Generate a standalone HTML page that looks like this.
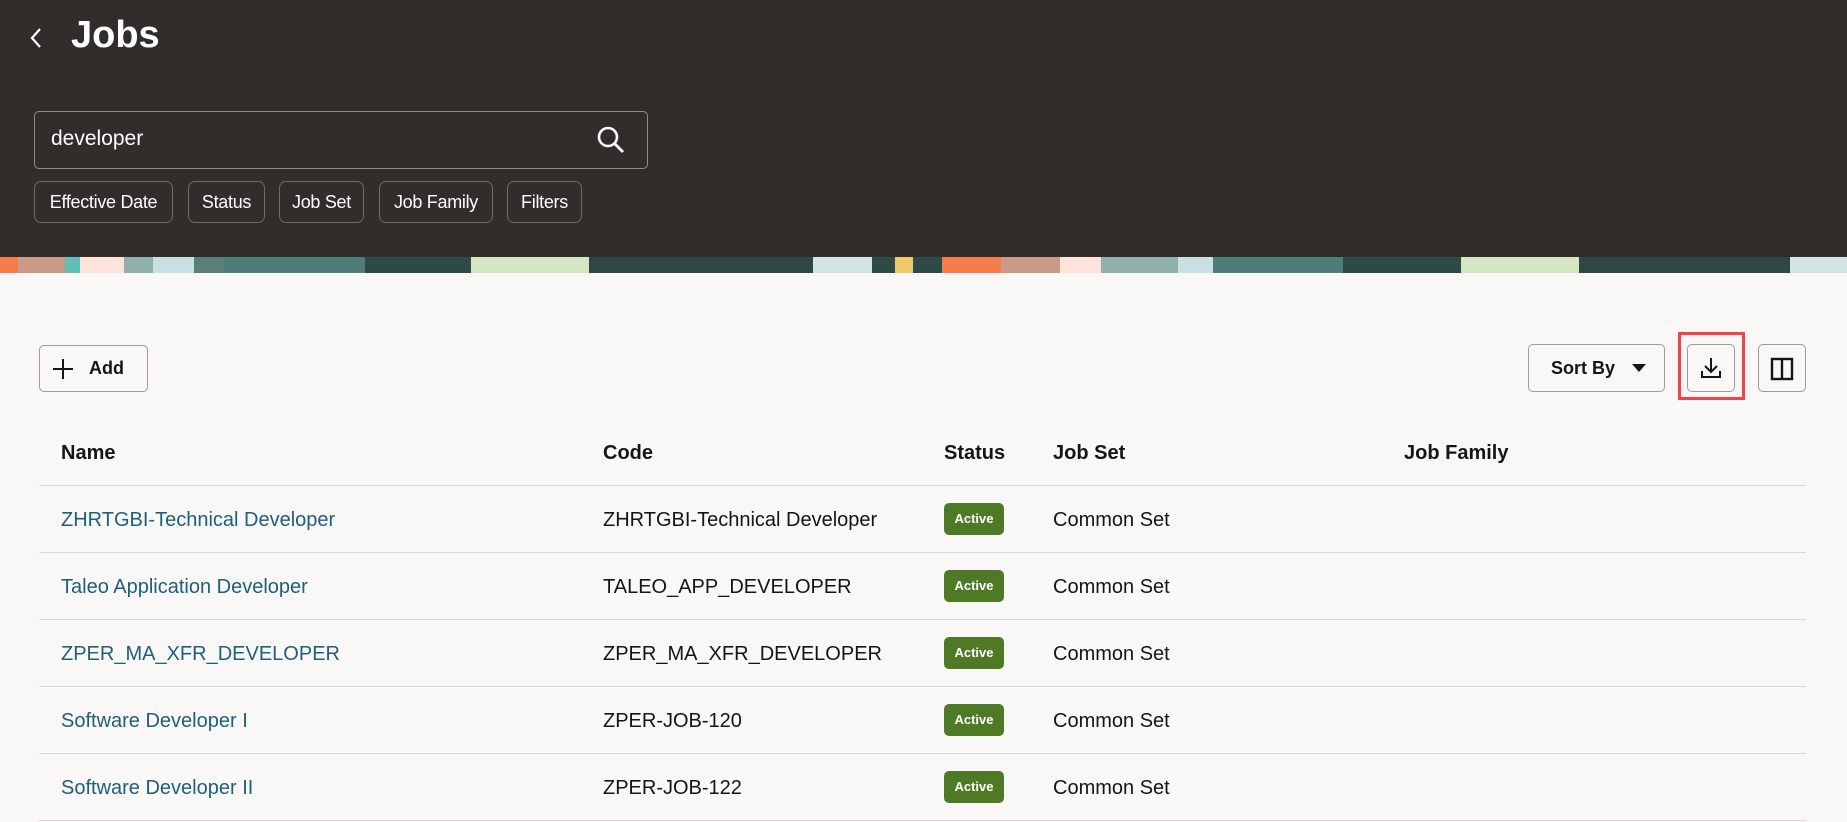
<!DOCTYPE html>
<html><head><meta charset="utf-8"><style>
*{box-sizing:border-box;margin:0;padding:0}
body{width:1847px;height:822px;overflow:hidden;background:#f9f8f6;font-family:"Liberation Sans",sans-serif;color:#161513;position:relative}
.hdr{position:absolute;left:0;top:0;width:1847px;height:257px;background:#312d2a}
.banner{position:absolute;left:0;top:257px;width:1847px;height:16px;background:linear-gradient(90deg,#f47c48 0 18px,#c99b86 18px 65px,#5fc0b8 65px 80px,#fde3da 80px 124px,#8fb0ad 124px 153px,#c8e0e2 153px 194px,#5a7f79 194px 224px,#4e7d78 224px 365px,#2d4a46 365px 471px,#d6e6c3 471px 589px,#2e4743 589px 813px,#d4e3e5 813px 872px,#2d4a46 872px 895px,#f0c96b 895px 913px,#2d4a46 913px 942px,#f47c48 942px 1001px,#c99b86 1001px 1060px,#fde3da 1060px 1101px,#8fb0ad 1101px 1178px,#c8e0e2 1178px 1213px,#4e7d78 1213px 1343px,#2d4a46 1343px 1461px,#d6e6c3 1461px 1579px,#2e4743 1579px 1790px,#d4e3e5 1790px)}
.abs{position:absolute}
.title{left:71px;top:14px;font-size:38px;font-weight:bold;color:#fff}
.search{left:34px;top:111px;width:614px;height:58px;border:1px solid #8f8b87;border-radius:5px;color:#fff;font-size:21px;padding:15px 16px}
.chip{top:181px;height:42px;border:1px solid #6f6a66;border-radius:7px;color:#fff;font-size:18px;line-height:40px;text-align:center;white-space:nowrap;letter-spacing:-0.3px}
.btn{border:1px solid #9e9a96;border-radius:5px}
.th{top:442px;font-size:20px;font-weight:bold}
.line{left:39px;width:1767px;height:1px;background:#dcd9d6}
.cell{font-size:20px}
.name{color:#1e5f7d}
.badge{width:60px;height:32px;background:#4e7a26;color:#fff;border-radius:5px;font-size:13px;font-weight:bold;text-align:center;line-height:32px}
</style></head><body>
<div class="hdr"></div>
<div class="banner"></div>
<svg class="abs" style="left:28px;top:26px" width="16" height="24" viewBox="0 0 16 24"><path d="M12 3 L4 12 L12 21" stroke="#fff" stroke-width="2.2" fill="none"/></svg>
<div class="abs title">Jobs</div>
<div class="abs search">developer</div>
<svg class="abs" style="left:596px;top:125px" width="30" height="30" viewBox="0 0 30 30"><circle cx="12" cy="12" r="9" stroke="#fff" stroke-width="2.6" fill="none"/><path d="M18.5 18.5 L27 27" stroke="#fff" stroke-width="2.8"/></svg>
<div class="abs chip" style="left:34px;width:139px">Effective Date</div>
<div class="abs chip" style="left:188px;width:77px">Status</div>
<div class="abs chip" style="left:279px;width:85px">Job Set</div>
<div class="abs chip" style="left:379px;width:114px">Job Family</div>
<div class="abs chip" style="left:507px;width:75px">Filters</div>

<div class="abs btn" style="left:39px;top:345px;width:109px;height:47px"></div>
<svg class="abs" style="left:51px;top:357px" width="24" height="24" viewBox="0 0 24 24"><path d="M12 2V22M2 12H22" stroke="#161513" stroke-width="2"/></svg>
<div class="abs" style="left:89px;top:358px;font-size:18px;font-weight:bold">Add</div>

<div class="abs btn" style="left:1528px;top:344px;width:137px;height:48px"></div>
<div class="abs" style="left:1551px;top:358px;font-size:18px;font-weight:bold">Sort By</div>
<svg class="abs" style="left:1632px;top:364px" width="14" height="8"><path d="M0 0H14L7 8Z" fill="#161513"/></svg>
<div class="abs" style="left:1678px;top:332px;width:67px;height:68px;border:3px solid #f0434a"></div>
<div class="abs btn" style="left:1687px;top:344px;width:48px;height:48px"></div>
<svg class="abs" style="left:1699px;top:356px" width="24" height="24" viewBox="0 0 24 24"><path d="M12 2V15M6 10L12 16L18 10M3 15V21H21V15" stroke="#161513" stroke-width="2" fill="none"/></svg>
<div class="abs btn" style="left:1758px;top:344px;width:48px;height:48px"></div>
<svg class="abs" style="left:1770px;top:357px" width="24" height="24" viewBox="0 0 24 24"><rect x="2" y="2" width="20" height="20" stroke="#161513" stroke-width="2.4" fill="none"/><path d="M12 2V22" stroke="#161513" stroke-width="2.4"/></svg>

<div class="abs th" style="left:61px">Name</div>
<div class="abs th" style="left:603px">Code</div>
<div class="abs th" style="left:944px">Status</div>
<div class="abs th" style="left:1053px">Job Set</div>
<div class="abs th" style="left:1404px">Job Family</div>
<div class="abs line" style="top:485px"></div>

<div class="abs line" style="top:552px"></div>
<div class="abs line" style="top:619px"></div>
<div class="abs line" style="top:686px"></div>
<div class="abs line" style="top:753px"></div>
<div class="abs line" style="top:820px"></div>

<div class="abs cell name" style="left:61px;top:509px">ZHRTGBI-Technical Developer</div>
<div class="abs cell" style="left:603px;top:509px">ZHRTGBI-Technical Developer</div>
<div class="abs badge" style="left:944px;top:503px">Active</div>
<div class="abs cell" style="left:1053px;top:509px">Common Set</div>

<div class="abs cell name" style="left:61px;top:576px">Taleo Application Developer</div>
<div class="abs cell" style="left:603px;top:576px">TALEO_APP_DEVELOPER</div>
<div class="abs badge" style="left:944px;top:570px">Active</div>
<div class="abs cell" style="left:1053px;top:576px">Common Set</div>

<div class="abs cell name" style="left:61px;top:643px">ZPER_MA_XFR_DEVELOPER</div>
<div class="abs cell" style="left:603px;top:643px">ZPER_MA_XFR_DEVELOPER</div>
<div class="abs badge" style="left:944px;top:637px">Active</div>
<div class="abs cell" style="left:1053px;top:643px">Common Set</div>

<div class="abs cell name" style="left:61px;top:710px">Software Developer I</div>
<div class="abs cell" style="left:603px;top:710px">ZPER-JOB-120</div>
<div class="abs badge" style="left:944px;top:704px">Active</div>
<div class="abs cell" style="left:1053px;top:710px">Common Set</div>

<div class="abs cell name" style="left:61px;top:777px">Software Developer II</div>
<div class="abs cell" style="left:603px;top:777px">ZPER-JOB-122</div>
<div class="abs badge" style="left:944px;top:771px">Active</div>
<div class="abs cell" style="left:1053px;top:777px">Common Set</div>
</body></html>
